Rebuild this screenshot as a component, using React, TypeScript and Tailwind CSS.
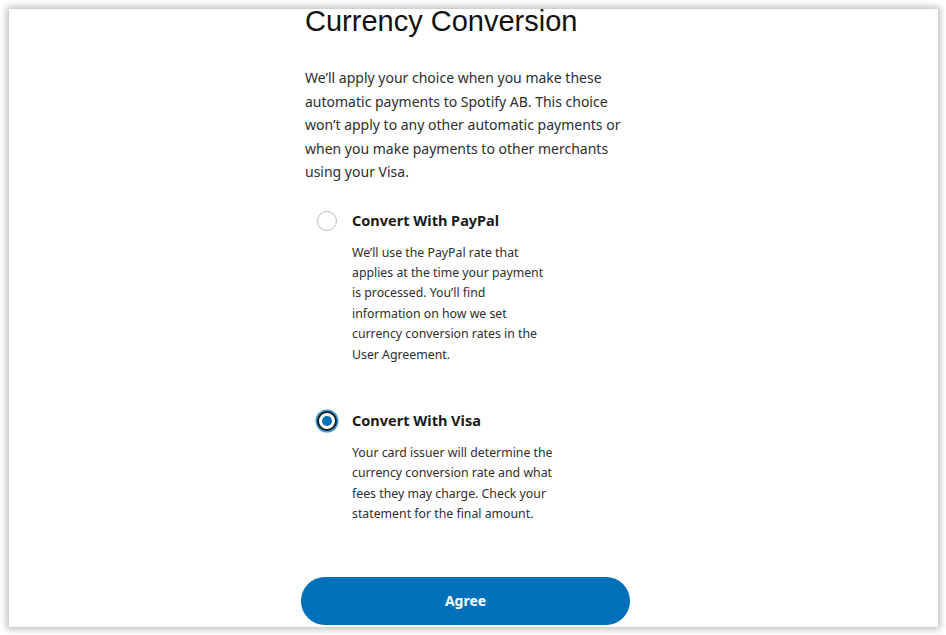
import React from 'react';

const body = { fontFamily: '"Noto Sans", "Open Sans", sans-serif' };

function Radio({ checked }: { checked?: boolean }) {
  if (checked) {
    return (
      <span className="flex h-[20px] w-[20px] items-center justify-center rounded-full border-2 border-[#1c1c1c] bg-white shadow-[0_0_0_1.5px_#3a9be0]">
        <span className="h-[10px] w-[10px] rounded-full bg-[#0070ba]" />
      </span>
    );
  }
  return <span className="block h-[20px] w-[20px] rounded-full border border-[#b7bcbf] bg-white" />;
}

function Option({
  title,
  lines,
  checked,
  className,
}: {
  title: string;
  lines: string[];
  checked?: boolean;
  className?: string;
}) {
  return (
    <div className={className}>
      <div className="flex items-center h-[24px]">
        <div className="w-[51px] pl-[16px]">
          <Radio checked={checked} />
        </div>
        <span className="text-[14.5px] font-bold text-[#1a1a1a]" style={body}>
          {title}
        </span>
      </div>
      <p className="mt-[10px] pl-[51px] text-[12.3px] leading-[20.4px] text-[#2c2e2f]" style={body}>
        {lines.map((l, i) => (
          <React.Fragment key={i}>
            {l}
            {i < lines.length - 1 && <br />}
          </React.Fragment>
        ))}
      </p>
    </div>
  );
}

export default function App() {
  return (
    <div className="w-[946px] h-[635px] bg-white pt-[9px] pl-[9px] pr-[8px] pb-[8px]">
      <div className="h-full w-full bg-white shadow-[0_0_7px_2px_rgba(0,0,0,0.28)]">
        <div className="ml-[292px] w-[329px] flex flex-col">
          <h1
            className="mt-[-5px] pl-[4px] text-[29px] leading-[34px] text-[#111] whitespace-nowrap"
            style={{ fontFamily: '"Liberation Sans", Arial, sans-serif' }}
          >
            Currency Conversion
          </h1>

          <p className="mt-[28px] pl-[4px] text-[14px] leading-[23.5px] text-[#2c2e2f] whitespace-nowrap" style={body}>
            We’ll apply your choice when you make these
            <br />
            automatic payments to Spotify AB. This choice
            <br />
            won’t apply to any other automatic payments or
            <br />
            when you make payments to other merchants
            <br />
            using your Visa.
          </p>

          <Option
            className="mt-[25px]"
            title="Convert With PayPal"
            lines={[
              'We’ll use the PayPal rate that',
              'applies at the time your payment',
              'is processed. You’ll find',
              'information on how we set',
              'currency conversion rates in the',
              'User Agreement.',
            ]}
          />

          <Option
            className="mt-[44px]"
            checked
            title="Convert With Visa"
            lines={[
              'Your card issuer will determine the',
              'currency conversion rate and what',
              'fees they may charge. Check your',
              'statement for the final amount.',
            ]}
          />

          <button
            className="mt-[52px] h-[48px] w-full rounded-full bg-[#0070ba] text-white text-[14px] font-bold"
            style={body}
          >
            Agree
          </button>
        </div>
      </div>
    </div>
  );
}
